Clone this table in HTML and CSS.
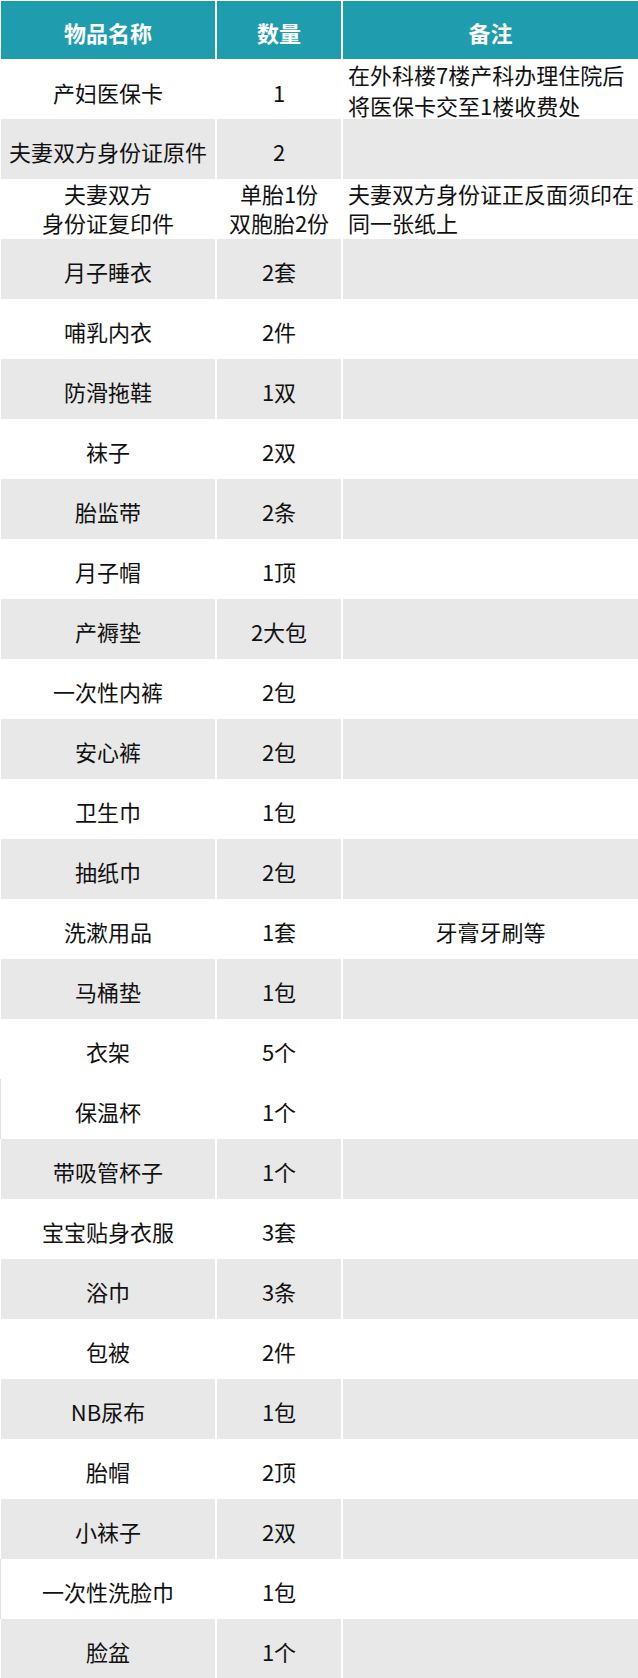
FILE: index.html
```html
<!DOCTYPE html>
<html lang="zh-CN">
<head>
<meta charset="utf-8">
<title>待产包清单</title>
<link rel="stylesheet" href="styles.css">
</head>
<body>
<div class="table">
  <div class="row head">
    <div class="cell">物品名称</div>
    <div class="cell">数量</div>
    <div class="cell">备注</div>
  </div>
  <div class="row">
    <div class="cell">产妇医保卡</div>
    <div class="cell">1</div>
    <div class="cell note top tall">在外科楼7楼产科办理住院后<br>将医保卡交至1楼收费处</div>
  </div>
  <div class="row gray">
    <div class="cell">夫妻双方身份证原件</div>
    <div class="cell">2</div>
    <div class="cell"></div>
  </div>
  <div class="row">
    <div class="cell top">夫妻双方<br>身份证复印件</div>
    <div class="cell top">单胎1份<br>双胞胎2份</div>
    <div class="cell note top">夫妻双方身份证正反面须印在<br>同一张纸上</div>
  </div>
  <div class="row gray"><div class="cell">月子睡衣</div><div class="cell">2套</div><div class="cell"></div></div>
  <div class="row"><div class="cell">哺乳内衣</div><div class="cell">2件</div><div class="cell"></div></div>
  <div class="row gray"><div class="cell">防滑拖鞋</div><div class="cell">1双</div><div class="cell"></div></div>
  <div class="row"><div class="cell">袜子</div><div class="cell">2双</div><div class="cell"></div></div>
  <div class="row gray"><div class="cell">胎监带</div><div class="cell">2条</div><div class="cell"></div></div>
  <div class="row"><div class="cell">月子帽</div><div class="cell">1顶</div><div class="cell"></div></div>
  <div class="row gray"><div class="cell">产褥垫</div><div class="cell">2大包</div><div class="cell"></div></div>
  <div class="row"><div class="cell">一次性内裤</div><div class="cell">2包</div><div class="cell"></div></div>
  <div class="row gray"><div class="cell">安心裤</div><div class="cell">2包</div><div class="cell"></div></div>
  <div class="row"><div class="cell">卫生巾</div><div class="cell">1包</div><div class="cell"></div></div>
  <div class="row gray"><div class="cell">抽纸巾</div><div class="cell">2包</div><div class="cell"></div></div>
  <div class="row"><div class="cell">洗漱用品</div><div class="cell">1套</div><div class="cell">牙膏牙刷等</div></div>
  <div class="row gray"><div class="cell">马桶垫</div><div class="cell">1包</div><div class="cell"></div></div>
  <div class="row"><div class="cell">衣架</div><div class="cell">5个</div><div class="cell"></div></div>
  <div class="row edge"><div class="cell">保温杯</div><div class="cell">1个</div><div class="cell"></div></div>
  <div class="row gray"><div class="cell">带吸管杯子</div><div class="cell">1个</div><div class="cell"></div></div>
  <div class="row"><div class="cell">宝宝贴身衣服</div><div class="cell">3套</div><div class="cell"></div></div>
  <div class="row gray"><div class="cell">浴巾</div><div class="cell">3条</div><div class="cell"></div></div>
  <div class="row"><div class="cell">包被</div><div class="cell">2件</div><div class="cell"></div></div>
  <div class="row gray"><div class="cell">NB尿布</div><div class="cell">1包</div><div class="cell"></div></div>
  <div class="row"><div class="cell">胎帽</div><div class="cell">2顶</div><div class="cell"></div></div>
  <div class="row gray"><div class="cell">小袜子</div><div class="cell">2双</div><div class="cell"></div></div>
  <div class="row edge"><div class="cell">一次性洗脸巾</div><div class="cell">1包</div><div class="cell"></div></div>
  <div class="row gray"><div class="cell">脸盆</div><div class="cell">1个</div><div class="cell"></div></div>
</div>
</body>
</html>
```

FILE: styles.css
```css
html, body {
  margin: 0;
  padding: 0;
  background: #ffffff;
}

body {
  font-family: "Noto Sans CJK SC", "Noto Sans", sans-serif;
  font-size: 22px;
  color: #111111;
}

.table {
  width: 638px;
  padding-top: 1px;
}

.row {
  display: grid;
  grid-template-columns: 214px 124px 1fr;
  column-gap: 2px;
  padding-left: 1px;
  height: 60px;
  overflow: hidden;
}

.row.head {
  height: 58px;
}

.row.edge {
  box-shadow: inset 1px 0 0 #e0e0e0;
}

.cell {
  display: flex;
  align-items: center;
  justify-content: center;
  text-align: center;
  padding-top: 3px;
  box-sizing: border-box;
  line-height: 32px;
  white-space: nowrap;
}

.head .cell {
  background: #1f9daf;
  color: #ffffff;
  font-weight: bold;
}

.gray .cell {
  background: #e8e8e8;
}

.cell.top {
  align-items: flex-start;
  padding-top: 0;
  line-height: 29px;
}

.cell.tall {
  line-height: 31px;
  padding-top: 0;
}

.cell.note {
  justify-content: flex-start;
  text-align: left;
  padding-left: 5px;
}
```
